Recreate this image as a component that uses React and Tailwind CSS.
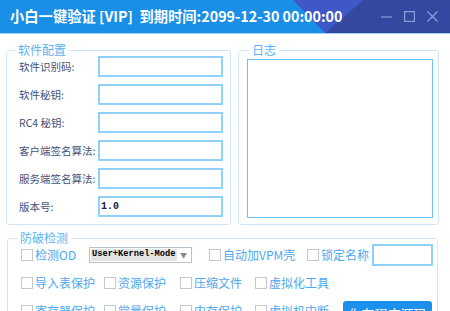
import React from 'react';

const cjk = { fontFamily: '"Noto Sans CJK SC", "Noto Sans", sans-serif' };

const Check = ({ label, w }) => (
  <div className={`flex items-center shrink-0 ${w}`}>
    <span className="w-[12px] h-[12px] border border-[#c4c8cc] bg-white shrink-0" />
    <span className="ml-[2px] text-[12px] leading-none text-[#4ea8ef] whitespace-nowrap">{label}</span>
  </div>
);

const Field = ({ label, value }) => (
  <div className="flex items-center h-[21px]">
    <span className="w-[79px] text-[10.5px] text-[#45527a] whitespace-nowrap">{label}</span>
    <div className="w-[125px] h-[21px] border-2 border-[#8fd1fa] bg-white flex items-center pl-[1px]">
      {value && (
        <span className="text-[10px] font-bold text-[#1c2233]" style={{ fontFamily: '"Liberation Mono", monospace' }}>
          {value}
        </span>
      )}
    </div>
  </div>
);

export default function App() {
  const fields = [
    ['软件识别码:', ''],
    ['软件秘钥:', ''],
    ['RC4 秘钥:', ''],
    ['客户端签名算法:', ''],
    ['服务端签名算法:', ''],
    ['版本号:', '1.0'],
  ];

  return (
    <div className="w-[450px] h-[311px] overflow-hidden bg-white" style={cjk}>
      {/* title bar */}
      <div className="relative h-[33px] bg-[#1a8fe8] flex items-center overflow-hidden">
        <svg className="absolute inset-0" width="450" height="33">
          <polygon points="293,0 363,0 325,33" fill="#3f58c6" />
          <polygon points="363,0 450,0 450,33 325,33" fill="#34489f" />
        </svg>
        <span className="relative ml-[10px] text-[14.3px] font-bold text-white whitespace-pre leading-none">
          小白一键验证 [VIP]  到期时间:2099-12-30 00:00:00
        </span>
        <div className="relative ml-auto mr-[12px] flex items-center gap-[12px]">
          <svg width="11" height="11" viewBox="0 0 11 11">
            <line x1="0" y1="6" x2="11" y2="6" stroke="#8c9fdb" strokeWidth="1.2" />
          </svg>
          <svg width="11" height="11" viewBox="0 0 11 11">
            <rect x="0.6" y="0.6" width="9.8" height="9.8" fill="none" stroke="#8c9fdb" strokeWidth="1.2" />
          </svg>
          <svg width="11" height="11" viewBox="0 0 11 11">
            <path d="M0.5 0.5 L10.5 10.5 M10.5 0.5 L0.5 10.5" stroke="#8c9fdb" strokeWidth="1.2" />
          </svg>
        </div>
      </div>
      <div className="h-[1px] bg-[#9fd2f7]" />

      {/* top panels */}
      <div className="flex gap-[7px] ml-[6px] mt-[10px]">
        <fieldset className="w-[225px] border border-[#cfe7fa] rounded-[3px] pl-[12px] pr-[4px] pb-[7px]">
          <legend className="-ml-[4px] px-[3px] text-[12px] leading-[12px] text-[#5cb2f2]">软件配置</legend>
          <div className="flex flex-col gap-[7px]">
            {fields.map(([l, v]) => (
              <Field key={l} label={l} value={v} />
            ))}
          </div>
        </fieldset>
        <fieldset className="w-[201px] border border-[#cfe7fa] rounded-[3px] pl-[8px] pr-[5px] pb-[6px]">
          <legend className="ml-[2px] px-[3px] text-[12px] leading-[12px] text-[#5cb2f2]">日志</legend>
          <div className="mt-[3px] h-[159px] border-[1.5px] border-[#6fc4f6] bg-white" />
        </fieldset>
      </div>

      {/* protection */}
      <fieldset className="ml-[7px] mt-[7px] w-[431px] border border-[#cfe7fa] rounded-[3px] pl-[13px] pr-[3px]">
        <legend className="-ml-[4px] px-[3px] text-[12px] leading-[12px] text-[#5cb2f2]">防破检测</legend>
        <div className="flex items-center h-[22px]">
          <Check label="检测OD" w="w-[68px]" />
          <div className="w-[103px] h-[16px] border border-[#b8c2cc] flex items-center px-[1px]">
            <span
              className="bg-[#e4e4e4] h-[12px] flex items-center pl-[1px] pr-[2px] text-[8.7px] font-bold text-black whitespace-nowrap"
              style={{ fontFamily: '"Liberation Mono", monospace' }}
            >
              User+Kernel-Mode
            </span>
            <span className="ml-auto mr-[3px] text-[7px] text-[#888]">▼</span>
          </div>
          <div className="w-[17px]" />
          <Check label="自动加VPM壳" w="w-[98px]" />
          <Check label="锁定名称" w="w-[65px]" />
          <div className="w-[61px] h-[22px] border-2 border-[#8fd1fa] bg-white" />
        </div>
        <div className="flex items-center h-[22px] mt-[6px]">
          <Check label="导入表保护" w="w-[83px]" />
          <Check label="资源保护" w="w-[76px]" />
          <Check label="压缩文件" w="w-[75px]" />
          <Check label="虚拟化工具" w="w-[80px]" />
        </div>
        <div className="flex items-center h-[22px] mt-[6px]">
          <Check label="寄存器保护" w="w-[83px]" />
          <Check label="常量保护" w="w-[76px]" />
          <Check label="内存保护" w="w-[75px]" />
          <Check label="虚拟机中断" w="w-[88px]" />
          <button className="w-[89px] h-[24px] mt-[4px] rounded-[3px] bg-[#1c90ec] text-white text-[13px] leading-none">
            你在程序源码
          </button>
        </div>
      </fieldset>
    </div>
  );
}
